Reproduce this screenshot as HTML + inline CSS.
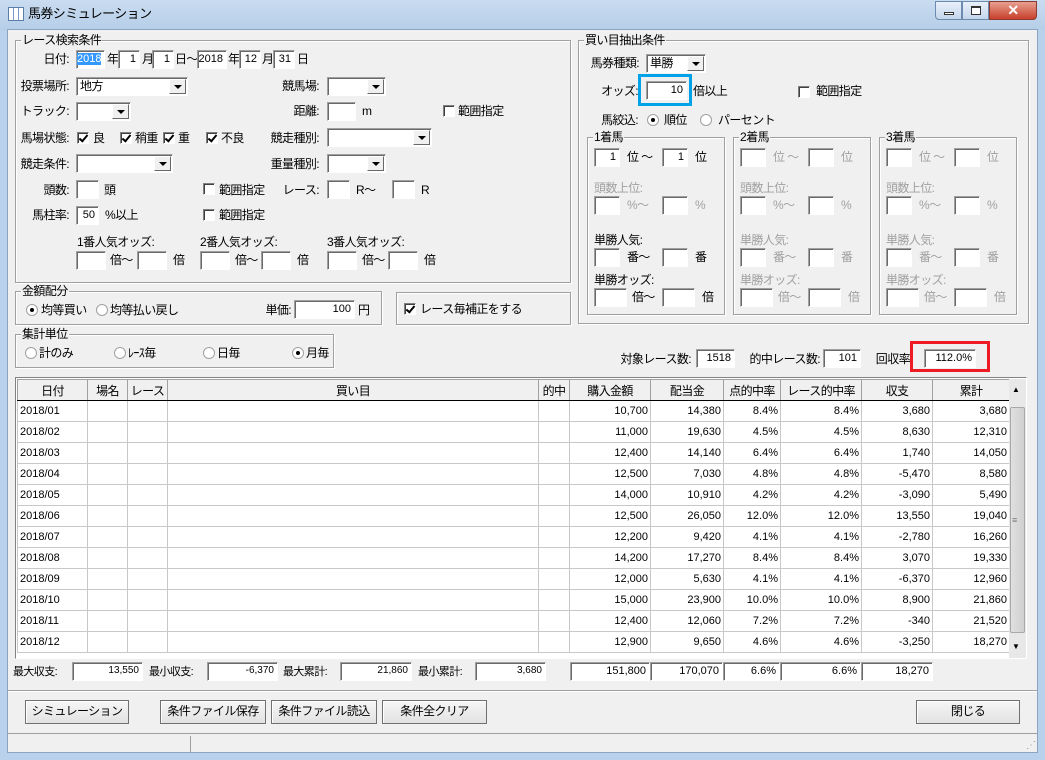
<!DOCTYPE html>
<html><head><meta charset="utf-8"><style>
*{box-sizing:border-box;margin:0;padding:0}
body{width:1045px;height:760px;overflow:hidden;background:#b9d1ea;font-family:"Liberation Sans","Noto Sans CJK JP",sans-serif;font-size:12px;color:#000;position:relative;letter-spacing:-0.6px}
.a{position:absolute}
.t{position:absolute;line-height:14px;white-space:nowrap;font-size:12px}
.r{text-align:right}
.g{color:#a0a0a0}
.in{position:absolute;background:#fff;border:1px solid;border-color:#a0a0a0 #fff #fff #a0a0a0;box-shadow:inset 1px 1px 0 #696969;font-size:11px;text-align:right;padding-right:3px;line-height:16px;letter-spacing:0}
.cb{position:absolute;background:#fff;border:1px solid;border-color:#a0a0a0 #fff #fff #a0a0a0;box-shadow:inset 1px 1px 0 #696969;font-size:12px;line-height:16px;padding-left:3px}
.cb:after{content:"";position:absolute;right:1px;top:1px;bottom:1px;width:15px;background:#f0f0f0;border:1px solid;border-color:#fff #696969 #696969 #fff}
.cb:before{content:"";position:absolute;right:5px;top:7px;border-left:4px solid transparent;border-right:4px solid transparent;border-top:4px solid #000;z-index:2}
.gb{position:absolute;border:1px solid #a0a0a0;box-shadow:inset 1px 1px 0 #fff,1px 1px 0 #fff}
.gl{position:absolute;background:#f0f0f0;line-height:14px;padding:0 1px;white-space:nowrap}
.ck{position:absolute;width:12px;height:12px;background:#fff;border:1px solid;border-color:#808080 #fff #fff #808080;box-shadow:inset 1px 1px 0 #404040}
.ck.on:after{content:"";position:absolute;left:3px;top:0px;width:3px;height:7px;border-right:2px solid #000;border-bottom:2px solid #000;transform:rotate(40deg)}
.rd{position:absolute;width:12px;height:12px;border-radius:50%;background:#fff;border:1px solid #a0a0a0}
.rd.on:after{content:"";position:absolute;left:3px;top:3px;width:4px;height:4px;border-radius:50%;background:#000}
.btn{position:absolute;background:linear-gradient(#f6f6f6,#e2e2e2);border:1px solid #707070;box-shadow:inset 1px 1px 0 #fff;text-align:center;line-height:20px;font-size:12px}
.sm{font-size:11px}
table{border-collapse:collapse;table-layout:fixed;position:absolute;left:17px;top:379px;background:#fff;letter-spacing:0}
td,th{border:1px solid #c8c8c8;height:21px;font-size:11px;font-weight:normal;text-align:right;padding-right:2px;white-space:nowrap;overflow:hidden}
th{background:#f0f0f0;border:1px solid #a0a0a0;border-bottom:1px solid #000;text-align:center;font-size:12px;height:21px;padding:0;letter-spacing:-0.6px}
td:first-child{text-align:left;padding-left:2px}
</style></head><body>
<div class="a" style="left:0;top:0;width:1045px;height:30px;background:linear-gradient(#c9dcf0,#b6cee8)"></div>
<div class="a" style="left:8px;top:7px;width:16px;height:14px;border:1px solid #5a7ea8;background:repeating-linear-gradient(90deg,#fff 0 4px,#7a9cc4 4px 5px)"></div>
<div class="t" style="left:28px;top:7px;font-size:13px">馬券シミュレーション</div>
<div class="a" style="left:935px;top:1px;width:27px;height:19px;border:1px solid #6d8bb0;border-radius:0 0 0 4px;background:linear-gradient(#e8f0f9,#c4d6ec)"><div class="a" style="left:8px;top:10px;width:10px;height:3px;border:1px solid #333;background:#fff"></div></div>
<div class="a" style="left:962px;top:1px;width:27px;height:19px;border:1px solid #6d8bb0;background:linear-gradient(#e8f0f9,#c4d6ec)"><div class="a" style="left:8px;top:4px;width:10px;height:9px;border:1px solid #333;border-top-width:2px;background:#fff"></div></div>
<div class="a" style="left:989px;top:1px;width:48px;height:19px;border:1px solid #8a3a30;border-radius:0 0 4px 0;background:linear-gradient(#e8a090,#c8402c);color:#fff;text-align:center;font-weight:bold;font-size:14px;line-height:17px">✕</div>
<div class="a" style="left:7px;top:29px;width:1031px;height:724px;background:#f0f0f0;border:1px solid #8aa4c2"></div>

<div class="gb" style="left:15px;top:40px;width:556px;height:243px"></div>
<div class="gl" style="left:21px;top:33px">レース検索条件</div>
<div class="t r" style="left:0;width:69px;top:52px">日付:</div>
<div class="in" style="left:76px;top:50px;width:29px;height:19px"><span style="background:#3399ff;color:#fff">2018</span></div>
<div class="t" style="left:107px;top:52px">年</div>
<div class="in" style="left:118px;top:50px;width:22px;height:19px">1</div>
<div class="t" style="left:142px;top:52px">月</div>
<div class="in" style="left:152px;top:50px;width:22px;height:19px">1</div>
<div class="t" style="left:175px;top:52px">日～</div>
<div class="in" style="left:197px;top:50px;width:30px;height:19px">2018</div>
<div class="t" style="left:228px;top:52px">年</div>
<div class="in" style="left:239px;top:50px;width:22px;height:19px">12</div>
<div class="t" style="left:262px;top:52px">月</div>
<div class="in" style="left:273px;top:50px;width:22px;height:19px">31</div>
<div class="t" style="left:297px;top:52px">日</div>

<div class="t r" style="left:0;width:69px;top:79px">投票場所:</div>
<div class="cb" style="left:76px;top:77px;width:112px;height:19px">地方</div>
<div class="t r" style="left:200px;width:119px;top:79px">競馬場:</div>
<div class="cb" style="left:327px;top:77px;width:59px;height:19px"></div>

<div class="t r" style="left:0;width:69px;top:104px">トラック:</div>
<div class="cb" style="left:76px;top:102px;width:55px;height:19px"></div>
<div class="t r" style="left:200px;width:119px;top:104px">距離:</div>
<div class="in" style="left:327px;top:102px;width:29px;height:19px"></div>
<div class="t" style="left:362px;top:104px">m</div>
<div class="ck" style="left:443px;top:105px"></div>
<div class="t" style="left:458px;top:104px">範囲指定</div>

<div class="t r" style="left:0;width:69px;top:131px">馬場状態:</div>
<div class="ck on" style="left:77px;top:132px"></div><div class="t" style="left:93px;top:131px">良</div>
<div class="ck on" style="left:120px;top:132px"></div><div class="t" style="left:135px;top:131px">稍重</div>
<div class="ck on" style="left:163px;top:132px"></div><div class="t" style="left:178px;top:131px">重</div>
<div class="ck on" style="left:206px;top:132px"></div><div class="t" style="left:221px;top:131px">不良</div>
<div class="t r" style="left:200px;width:119px;top:131px">競走種別:</div>
<div class="cb" style="left:327px;top:128px;width:105px;height:19px"></div>

<div class="t r" style="left:0;width:69px;top:157px">競走条件:</div>
<div class="cb" style="left:76px;top:154px;width:97px;height:19px"></div>
<div class="t r" style="left:200px;width:119px;top:157px">重量種別:</div>
<div class="cb" style="left:327px;top:154px;width:59px;height:19px"></div>

<div class="t r" style="left:0;width:69px;top:183px">頭数:</div>
<div class="in" style="left:76px;top:180px;width:23px;height:19px"></div>
<div class="t" style="left:104px;top:183px">頭</div>
<div class="ck" style="left:203px;top:183px"></div><div class="t" style="left:219px;top:183px">範囲指定</div>
<div class="t r" style="left:200px;width:119px;top:183px">レース:</div>
<div class="in" style="left:327px;top:180px;width:23px;height:19px"></div>
<div class="t" style="left:356px;top:183px">R～</div>
<div class="in" style="left:392px;top:180px;width:23px;height:19px"></div>
<div class="t" style="left:421px;top:183px">R</div>

<div class="t r" style="left:0;width:69px;top:208px">馬柱率:</div>
<div class="in" style="left:76px;top:206px;width:23px;height:19px">50</div>
<div class="t" style="left:105px;top:208px">%以上</div>
<div class="ck" style="left:203px;top:209px"></div><div class="t" style="left:219px;top:208px">範囲指定</div>

<div class="t" style="left:77px;top:235px">1番人気オッズ:</div>
<div class="t" style="left:200px;top:235px">2番人気オッズ:</div>
<div class="t" style="left:327px;top:235px">3番人気オッズ:</div>
<div class="in" style="left:76px;top:251px;width:30px;height:19px"></div><div class="t" style="left:110px;top:253px">倍～</div>
<div class="in" style="left:137px;top:251px;width:30px;height:19px"></div><div class="t" style="left:173px;top:253px">倍</div>
<div class="in" style="left:200px;top:251px;width:30px;height:19px"></div><div class="t" style="left:235px;top:253px">倍～</div>
<div class="in" style="left:261px;top:251px;width:30px;height:19px"></div><div class="t" style="left:297px;top:253px">倍</div>
<div class="in" style="left:327px;top:251px;width:30px;height:19px"></div><div class="t" style="left:362px;top:253px">倍～</div>
<div class="in" style="left:388px;top:251px;width:30px;height:19px"></div><div class="t" style="left:424px;top:253px">倍</div>

<div class="gb" style="left:578px;top:40px;width:451px;height:284px"></div>
<div class="gl" style="left:584px;top:33px">買い目抽出条件</div>
<div class="t r" style="left:560px;width:79px;top:56px">馬券種類:</div>
<div class="cb" style="left:646px;top:54px;width:60px;height:19px">単勝</div>
<div class="t r" style="left:560px;width:78px;top:84px">オッズ:</div>
<div class="a" style="left:638px;top:74px;width:54px;height:32px;border:3px solid #00a2e8"></div>
<div class="in" style="left:646px;top:81px;width:41px;height:19px">10</div>
<div class="t" style="left:693px;top:84px">倍以上</div>
<div class="ck" style="left:798px;top:86px"></div><div class="t" style="left:816px;top:84px">範囲指定</div>
<div class="t r" style="left:560px;width:78px;top:113px">馬絞込:</div>
<div class="rd on" style="left:647px;top:114px"></div><div class="t" style="left:664px;top:113px">順位</div>
<div class="rd" style="left:700px;top:114px"></div><div class="t" style="left:718px;top:113px">パーセント</div>

<div class="gb" style="left:587px;top:137px;width:138px;height:178px"></div><div class="gl" style="left:593px;top:130px">1着馬</div>
<div class="gb" style="left:733px;top:137px;width:138px;height:178px"></div><div class="gl" style="left:739px;top:130px">2着馬</div>
<div class="gb" style="left:879px;top:137px;width:138px;height:178px"></div><div class="gl" style="left:885px;top:130px">3着馬</div>

<div class="in" style="left:594px;top:148px;width:26px;height:19px">1</div><div class="t" style="left:627px;top:150px">位 ～</div>
<div class="in" style="left:662px;top:148px;width:26px;height:19px">1</div><div class="t" style="left:695px;top:150px">位</div>
<div class="t g" style="left:594px;top:181px">頭数上位:</div>
<div class="in" style="left:594px;top:196px;width:26px;height:19px"></div><div class="t g" style="left:627px;top:198px">%～</div>
<div class="in" style="left:662px;top:196px;width:26px;height:19px"></div><div class="t g" style="left:695px;top:198px">%</div>
<div class="t" style="left:594px;top:233px">単勝人気:</div>
<div class="in" style="left:594px;top:248px;width:26px;height:19px"></div><div class="t" style="left:627px;top:250px">番～</div>
<div class="in" style="left:662px;top:248px;width:26px;height:19px"></div><div class="t" style="left:695px;top:250px">番</div>
<div class="t" style="left:594px;top:273px">単勝オッズ:</div>
<div class="in" style="left:594px;top:288px;width:33px;height:19px"></div><div class="t" style="left:632px;top:290px">倍～</div>
<div class="in" style="left:662px;top:288px;width:33px;height:19px"></div><div class="t" style="left:702px;top:290px">倍</div>

<div class="in" style="left:740px;top:148px;width:26px;height:19px"></div><div class="t g" style="left:773px;top:150px">位 ～</div>
<div class="in" style="left:808px;top:148px;width:26px;height:19px"></div><div class="t g" style="left:841px;top:150px">位</div>
<div class="t g" style="left:740px;top:181px">頭数上位:</div>
<div class="in" style="left:740px;top:196px;width:26px;height:19px"></div><div class="t g" style="left:773px;top:198px">%～</div>
<div class="in" style="left:808px;top:196px;width:26px;height:19px"></div><div class="t g" style="left:841px;top:198px">%</div>
<div class="t g" style="left:740px;top:233px">単勝人気:</div>
<div class="in" style="left:740px;top:248px;width:26px;height:19px"></div><div class="t g" style="left:773px;top:250px">番～</div>
<div class="in" style="left:808px;top:248px;width:26px;height:19px"></div><div class="t g" style="left:841px;top:250px">番</div>
<div class="t g" style="left:740px;top:273px">単勝オッズ:</div>
<div class="in" style="left:740px;top:288px;width:33px;height:19px"></div><div class="t g" style="left:778px;top:290px">倍～</div>
<div class="in" style="left:808px;top:288px;width:33px;height:19px"></div><div class="t g" style="left:848px;top:290px">倍</div>

<div class="in" style="left:886px;top:148px;width:26px;height:19px"></div><div class="t g" style="left:919px;top:150px">位 ～</div>
<div class="in" style="left:954px;top:148px;width:26px;height:19px"></div><div class="t g" style="left:987px;top:150px">位</div>
<div class="t g" style="left:886px;top:181px">頭数上位:</div>
<div class="in" style="left:886px;top:196px;width:26px;height:19px"></div><div class="t g" style="left:919px;top:198px">%～</div>
<div class="in" style="left:954px;top:196px;width:26px;height:19px"></div><div class="t g" style="left:987px;top:198px">%</div>
<div class="t g" style="left:886px;top:233px">単勝人気:</div>
<div class="in" style="left:886px;top:248px;width:26px;height:19px"></div><div class="t g" style="left:919px;top:250px">番～</div>
<div class="in" style="left:954px;top:248px;width:26px;height:19px"></div><div class="t g" style="left:987px;top:250px">番</div>
<div class="t g" style="left:886px;top:273px">単勝オッズ:</div>
<div class="in" style="left:886px;top:288px;width:33px;height:19px"></div><div class="t g" style="left:924px;top:290px">倍～</div>
<div class="in" style="left:954px;top:288px;width:33px;height:19px"></div><div class="t g" style="left:994px;top:290px">倍</div>

<div class="gb" style="left:15px;top:291px;width:367px;height:34px"></div><div class="gl" style="left:21px;top:284px">金額配分</div>
<div class="rd on" style="left:26px;top:304px"></div><div class="t" style="left:41px;top:303px">均等買い</div>
<div class="rd" style="left:96px;top:304px"></div><div class="t" style="left:110px;top:303px">均等払い戻し</div>
<div class="t r" style="left:240px;width:51px;top:303px">単価:</div>
<div class="in" style="left:294px;top:300px;width:61px;height:19px">100</div>
<div class="t" style="left:358px;top:303px">円</div>
<div class="gb" style="left:396px;top:292px;width:175px;height:33px"></div>
<div class="ck on" style="left:404px;top:303px"></div><div class="t" style="left:420px;top:302px">レース毎補正をする</div>

<div class="gb" style="left:15px;top:334px;width:319px;height:34px"></div><div class="gl" style="left:21px;top:327px">集計単位</div>
<div class="rd" style="left:25px;top:347px"></div><div class="t" style="left:39px;top:346px">計のみ</div>
<div class="rd" style="left:114px;top:347px"></div><div class="t" style="left:128px;top:346px">ﾚｰｽ毎</div>
<div class="rd" style="left:203px;top:347px"></div><div class="t" style="left:217px;top:346px">日毎</div>
<div class="rd on" style="left:292px;top:347px"></div><div class="t" style="left:306px;top:346px">月毎</div>

<div class="t r" style="left:590px;width:101px;top:352px">対象レース数:</div>
<div class="in" style="left:696px;top:349px;width:39px;height:19px">1518</div>
<div class="t r" style="left:730px;width:90px;top:352px">的中レース数:</div>
<div class="in" style="left:823px;top:349px;width:38px;height:19px">101</div>
<div class="t r" style="left:860px;width:50px;top:352px">回収率</div>
<div class="a" style="left:910px;top:341px;width:80px;height:31px;border:3px solid #ed1c24"></div>
<div class="in" style="left:924px;top:349px;width:52px;height:19px">112.0%</div>

<div class="a" style="left:15px;top:377px;width:1012px;height:282px;border:1px solid;border-color:#828282 #fff #fff #828282;background:#fff"></div>
<table>
<colgroup><col style="width:70px"><col style="width:40px"><col style="width:40px"><col style="width:371px"><col style="width:31px"><col style="width:81px"><col style="width:73px"><col style="width:57px"><col style="width:81px"><col style="width:71px"><col style="width:77px"></colgroup>
<tr><th>日付</th><th>場名</th><th>レース</th><th>買い目</th><th>的中</th><th>購入金額</th><th>配当金</th><th>点的中率</th><th>レース的中率</th><th>収支</th><th>累計</th></tr>
<tr><td>2018/01</td><td></td><td></td><td></td><td></td><td>10,700</td><td>14,380</td><td>8.4%</td><td>8.4%</td><td>3,680</td><td>3,680</td></tr>
<tr><td>2018/02</td><td></td><td></td><td></td><td></td><td>11,000</td><td>19,630</td><td>4.5%</td><td>4.5%</td><td>8,630</td><td>12,310</td></tr>
<tr><td>2018/03</td><td></td><td></td><td></td><td></td><td>12,400</td><td>14,140</td><td>6.4%</td><td>6.4%</td><td>1,740</td><td>14,050</td></tr>
<tr><td>2018/04</td><td></td><td></td><td></td><td></td><td>12,500</td><td>7,030</td><td>4.8%</td><td>4.8%</td><td>-5,470</td><td>8,580</td></tr>
<tr><td>2018/05</td><td></td><td></td><td></td><td></td><td>14,000</td><td>10,910</td><td>4.2%</td><td>4.2%</td><td>-3,090</td><td>5,490</td></tr>
<tr><td>2018/06</td><td></td><td></td><td></td><td></td><td>12,500</td><td>26,050</td><td>12.0%</td><td>12.0%</td><td>13,550</td><td>19,040</td></tr>
<tr><td>2018/07</td><td></td><td></td><td></td><td></td><td>12,200</td><td>9,420</td><td>4.1%</td><td>4.1%</td><td>-2,780</td><td>16,260</td></tr>
<tr><td>2018/08</td><td></td><td></td><td></td><td></td><td>14,200</td><td>17,270</td><td>8.4%</td><td>8.4%</td><td>3,070</td><td>19,330</td></tr>
<tr><td>2018/09</td><td></td><td></td><td></td><td></td><td>12,000</td><td>5,630</td><td>4.1%</td><td>4.1%</td><td>-6,370</td><td>12,960</td></tr>
<tr><td>2018/10</td><td></td><td></td><td></td><td></td><td>15,000</td><td>23,900</td><td>10.0%</td><td>10.0%</td><td>8,900</td><td>21,860</td></tr>
<tr><td>2018/11</td><td></td><td></td><td></td><td></td><td>12,400</td><td>12,060</td><td>7.2%</td><td>7.2%</td><td>-340</td><td>21,520</td></tr>
<tr><td>2018/12</td><td></td><td></td><td></td><td></td><td>12,900</td><td>9,650</td><td>4.6%</td><td>4.6%</td><td>-3,250</td><td>18,270</td></tr>
</table>
<div class="a" style="left:1009px;top:379px;width:17px;height:279px;background:#e8e8e8"></div>
<div class="t" style="left:1012px;top:383px;font-size:8px">▲</div>
<div class="a" style="left:1010px;top:407px;width:15px;height:226px;background:linear-gradient(90deg,#e0e0e0,#d0d0d0);border:1px solid #a8a8a8;border-radius:2px"></div>
<div class="t" style="left:1012px;top:513px;font-size:9px;color:#777">≡</div>
<div class="t" style="left:1012px;top:640px;font-size:8px">▼</div>

<div class="t sm" style="left:13px;top:665px">最大収支:</div>
<div class="in" style="left:72px;top:662px;width:71px;height:19px;font-size:10px">13,550</div>
<div class="t sm" style="left:149px;top:665px">最小収支:</div>
<div class="in" style="left:207px;top:662px;width:71px;height:19px;font-size:10px">-6,370</div>
<div class="t sm" style="left:283px;top:665px">最大累計:</div>
<div class="in" style="left:340px;top:662px;width:72px;height:19px;font-size:10px">21,860</div>
<div class="t sm" style="left:418px;top:665px">最小累計:</div>
<div class="in" style="left:475px;top:662px;width:71px;height:19px;font-size:10px">3,680</div>
<div class="in" style="left:570px;top:662px;width:80px;height:19px">151,800</div>
<div class="in" style="left:650px;top:662px;width:73px;height:19px">170,070</div>
<div class="in" style="left:723px;top:662px;width:57px;height:19px">6.6%</div>
<div class="in" style="left:780px;top:662px;width:81px;height:19px">6.6%</div>
<div class="in" style="left:861px;top:662px;width:72px;height:19px">18,270</div>

<div class="a" style="left:8px;top:690px;width:1029px;height:2px;border-top:1px solid #a0a0a0;border-bottom:1px solid #fff"></div>
<div class="btn" style="left:25px;top:700px;width:104px;height:24px">シミュレーション</div>
<div class="btn" style="left:160px;top:700px;width:106px;height:24px">条件ファイル保存</div>
<div class="btn" style="left:271px;top:700px;width:106px;height:24px">条件ファイル読込</div>
<div class="btn" style="left:382px;top:700px;width:105px;height:24px">条件全クリア</div>
<div class="btn" style="left:916px;top:700px;width:104px;height:24px">閉じる</div>

<div class="a" style="left:8px;top:733px;width:1029px;height:1px;background:#a0a0a0"></div>
<div class="a" style="left:190px;top:736px;width:1px;height:16px;background:#a0a0a0"></div>
<div class="t" style="left:1026px;top:739px;color:#999;font-size:10px">⋰</div>
</body></html>
